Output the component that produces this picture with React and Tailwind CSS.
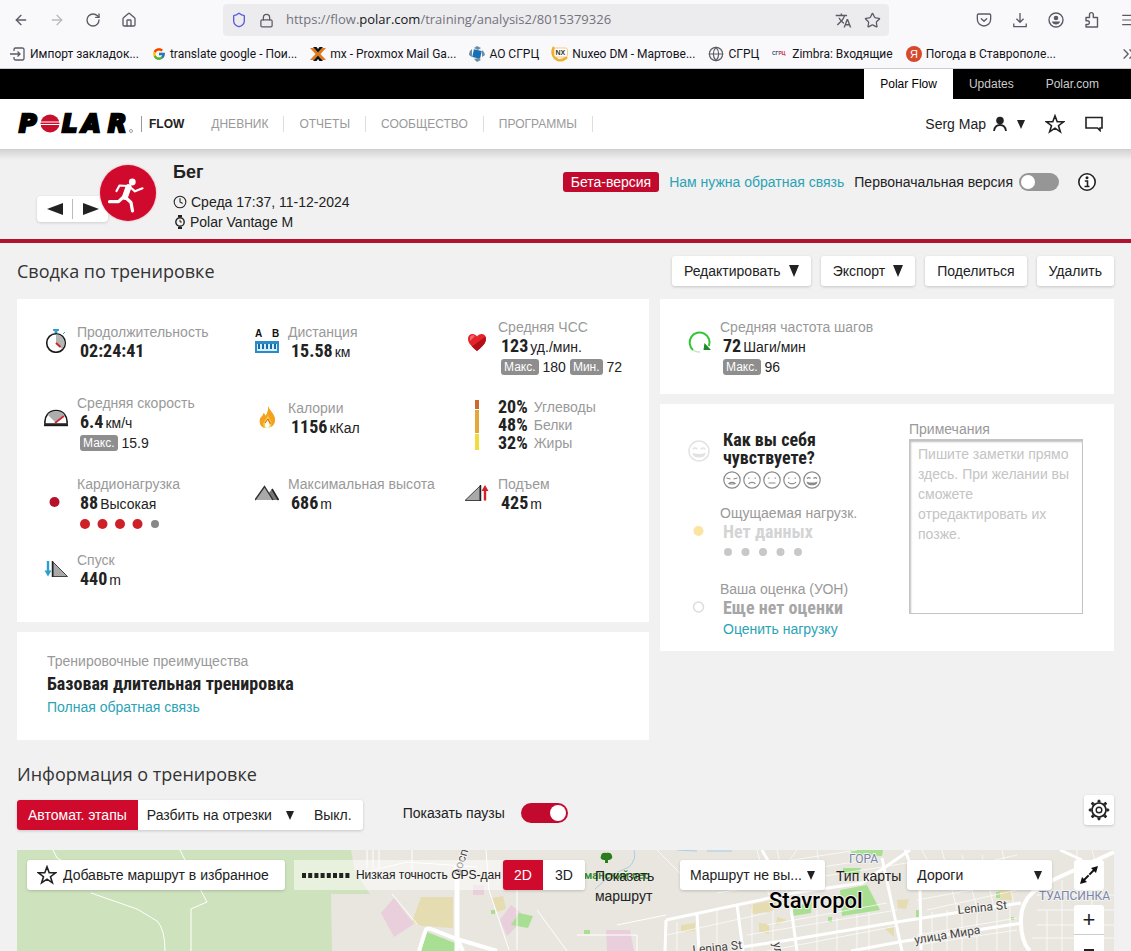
import {
  ArrowLeft,
  ArrowRight,
  ChevronsRight,
  Clock,
  Globe,
  House,
  Lock,
  Menu,
  Pocket,
  RotateCw,
  Shield,
  Star,
} from "lucide-react";
import { useState } from "react";
import { FcGoogle } from "react-icons/fc";
import { MdTranslate } from "react-icons/md";

const bookmarks = [
  { label: "Импорт закладок...", icon: ImportIcon },
  { label: "translate google - Пои...", icon: GoogleIcon },
  { label: "mx - Proxmox Mail Ga...", icon: ProxmoxIcon },
  { label: "АО СГРЦ", icon: GearBlueIcon },
  { label: "Nuxeo DM - Мартове...", icon: NuxeoIcon },
  { label: "СГРЦ", icon: GlobeIcon },
  { label: "Zimbra: Входящие", icon: ZimbraIcon },
  { label: "Погода в Ставрополе...", icon: YandexIcon },
];

const navItems = ["ДНЕВНИК", "ОТЧЕТЫ", "СООБЩЕСТВО", "ПРОГРАММЫ"];

const macros = [
  { value: "20%", name: "Углеводы" },
  { value: "48%", name: "Белки" },
  { value: "32%", name: "Жиры" },
];

const moods = ["Ужасно", "Плохо", "Нормально", "Хорошо", "Отлично"];

/* ---------- browser icons ---------- */

function ImportIcon() {
  return (
    <svg width="16" height="16" viewBox="0 0 16 16" fill="none" stroke="#5b5b66" strokeWidth="1.3">
      <path d="M4 5V3.500A1.500 1.500 0 0 1 5.500 2h7A1.500 1.500 0 0 1 14 3.500v9a1.500 1.500 0 0 1-1.500 1.500h-7A1.500 1.500 0 0 1 4 12.500V11" />
      <path d="M0 8h10M7.500 5.500 10 8l-2.500 2.500" />
    </svg>
  );
}

function GoogleIcon() {
  return <FcGoogle size={14} />;
}

function ProxmoxIcon() {
  return (
    <svg width="16" height="16" viewBox="0 0 16 16">
      <path d="M0 2h4l4 4.500L12 2h4l-5.500 6 5.500 6h-4L8 9.500 4 14H0l5.500-6z" fill="#e07a1c" />
      <path d="M3 1h3.500L8 3l1.500-2H13L8 6.500zM3 15h3.500L8 13l1.500 2H13L8 9.500z" fill="#111" />
    </svg>
  );
}

function GearBlueIcon() {
  return (
    <svg width="16" height="16" viewBox="0 0 16 16">
      <path d="M3 3Q0 5 0 9l3 2zM13 4q3 2 3 5l-3 2zM5 2l3-2 4 2-3 2zM5 13l3 3 4-2-3-2z" fill="#6d8ba3" />
      <rect x="4" y="4" width="8" height="8" fill="#1670b5" transform="rotate(12 8 8)" />
    </svg>
  );
}

function NuxeoIcon() {
  return (
    <svg width="16" height="16" viewBox="0 0 16 16" className="overflow-visible">
      <path d="M2 1C-1 6 1 12 6 14c4 1 7-1 9-3" fill="none" stroke="#eeb02f" strokeWidth="2.500" />
      <rect x="2" y="2" width="13.500" height="9" rx="2" fill="#fff" stroke="#eeb02f" strokeWidth="0.600" />
      <text x="3.500" y="9" fontSize="7" fontWeight="700" fontFamily="Liberation Sans" fill="#333">NX</text>
    </svg>
  );
}

function GlobeIcon() {
  return <Globe size={16} strokeWidth={1.8} color="#5b5b66" />;
}

function ZimbraIcon() {
  return (
    <svg width="16" height="16" viewBox="0 0 16 16" className="overflow-visible">
      <text x="0" y="9" fontSize="5" fontWeight="700" fontFamily="Liberation Sans" fill="#31508f">
        СГ<tspan fill="#c8324b">РЦ</tspan>
      </text>
    </svg>
  );
}

function YandexIcon() {
  return (
    <svg width="16" height="16" viewBox="0 0 16 16">
      <circle cx="8" cy="8" r="8" fill="#d6492c" />
      <text x="8" y="12" fontSize="11" textAnchor="middle" fontFamily="Liberation Sans" fill="#fff">Я</text>
    </svg>
  );
}

function DownloadIcon() {
  return (
    <svg width="16" height="16" viewBox="0 0 18 18" fill="none" stroke="currentColor" strokeWidth="1.500">
      <path d="M9 1v10.500M5 7.500l4 4 4-4M2 13v3.500h14V13" />
    </svg>
  );
}

function AccountIcon() {
  return (
    <svg width="16" height="16" viewBox="0 0 16 16">
      <circle cx="8" cy="8" r="7" fill="none" stroke="currentColor" strokeWidth="1.400" />
      <circle cx="8" cy="6" r="2.300" fill="currentColor" />
      <path d="M3.800 9.500h8.400c-.6 2-2.200 3-4.200 3s-3.600-1-4.200-3z" fill="currentColor" />
    </svg>
  );
}

function ExtensionIcon() {
  return (
    <svg width="16" height="18" viewBox="0 0 16 18" fill="none" stroke="currentColor" strokeWidth="1.400">
      <path d="M2 6.500h3.500V3.500a1.800 1.800 0 0 1 3.800 0v3h4.200v9.500H2v-2.500h1.500a1.800 1.800 0 0 0 0-3.800H2z" strokeLinejoin="round" />
    </svg>
  );
}

/* ---------- site icons ---------- */

function Caret({ className = "" }) {
  return (
    <svg className={className} width="10" height="12" viewBox="0 0 10 12" aria-hidden="true">
      <path d="M0 0h10L5 12z" fill="#222" />
    </svg>
  );
}

function SmallCaret({ className = "" }) {
  return (
    <svg className={className} width="8" height="9" viewBox="0 0 8 9" aria-hidden="true">
      <path d="M0 0h8L4 9z" fill="#222" />
    </svg>
  );
}

function PolarLogo() {
  return (
    <svg width="116" height="24" viewBox="0 0 116 24" role="img" aria-label="POLAR" className="overflow-visible">
      <g fontFamily="DejaVu Sans" fontWeight="700" fontStyle="italic" fontSize="24" fill="#000" stroke="#000" strokeWidth="2.600">
        <text x="1" y="20">P</text>
        <text x="44" y="20">L</text>
        <text x="64" y="20">A</text>
        <text x="90" y="20">R</text>
      </g>
      <ellipse cx="32" cy="11.500" rx="9.500" ry="9" fill="#c8102e" />
      <path d="M22 10h20M22 12.500h20" stroke="#fff" strokeWidth="1" />
      <circle cx="113" cy="19" r="1.500" fill="none" stroke="#888" strokeWidth="0.800" />
    </svg>
  );
}

function UserIcon() {
  return (
    <svg width="14" height="16" viewBox="0 0 14 16">
      <circle cx="7" cy="4.500" r="3.800" fill="#222" />
      <path d="M1 15c.5-4 3-6 6-6s5.500 2 6 6" fill="none" stroke="#222" strokeWidth="1.800" />
    </svg>
  );
}

function FiveStar({ size = 20 }) {
  return (
    <svg width={size} height={size} viewBox="0 0 20 20" fill="none" stroke="#222" strokeWidth="1.600">
      <path d="M10 1.800l2.200 6h6.300l-5 3.900 1.900 6.200L10 14.200l-5.400 3.700 1.900-6.200-5-3.900h6.300z" />
    </svg>
  );
}

function SpeechIcon() {
  return (
    <svg width="18" height="16" viewBox="0 0 18 16" fill="none" stroke="#222" strokeWidth="1.600">
      <path d="M1 1.500h16v10.500h-2v2.500L12.500 12H1z" />
    </svg>
  );
}

function RunnerIcon() {
  return (
    <svg width="56" height="56" viewBox="0 0 56 56" fill="none" stroke="#fff" strokeLinecap="round" strokeLinejoin="round">
      <circle cx="32.300" cy="17" r="3.400" fill="#fff" stroke="none" />
      <path d="M28.500 22L25 32" strokeWidth="6" />
      <path d="M28 21l-8.500-.5L16.500 26M29.500 21.500l5.500 4.800 7.500-3" strokeWidth="2.200" />
      <path d="M25.500 32.500l5.500 5L32.500 46M24 31.500l-5.500 5.200H9.500" strokeWidth="3.200" />
    </svg>
  );
}

function InfoIcon() {
  return (
    <svg width="20" height="20" viewBox="0 0 20 20" className="ml-2">
      <circle cx="10" cy="10" r="8.200" fill="#fff" stroke="#222" strokeWidth="1.600" />
      <circle cx="10" cy="5.800" r="1.500" fill="#222" />
      <path d="M7.800 9h2.700v5.500M7.500 14.500h5" fill="none" stroke="#222" strokeWidth="1.600" />
    </svg>
  );
}

function WatchIcon() {
  return (
    <svg width="13" height="14" viewBox="0 0 13 14">
      <path d="M5 0h4v2H5zM5 12h4v2H5z" fill="#222" />
      <circle cx="7" cy="7" r="4.200" fill="none" stroke="#222" strokeWidth="1.400" />
      <path d="M7 4.800V7h1.800" fill="none" stroke="#222" />
    </svg>
  );
}

function StopwatchIcon() {
  return (
    <svg width="24" height="24" viewBox="0 0 24 24">
      <path d="M9.500 0h5v1.600h-1.600V4h-1.800V1.600H9.500zM19 5l2-2" fill="#2a9fd0" stroke="#2a9fd0" />
      <circle cx="12" cy="14" r="9.300" fill="#fff" stroke="#1b1b1b" strokeWidth="1.600" />
      <path d="M12 14V5.500a8.500 8.500 0 0 1 6 14.500z" fill="#b5b5b5" />
      <path d="M12 14l4.500 4" stroke="#d0232b" strokeWidth="2" />
    </svg>
  );
}

function DistanceIcon() {
  return (
    <svg width="24" height="24" viewBox="0 0 24 24" className="overflow-visible">
      <g fontFamily="Liberation Sans" fontWeight="700" fontSize="10" fill="#111">
        <text x="0" y="8">A</text>
        <text x="17" y="8">B</text>
      </g>
      <rect y="12" width="24" height="12" fill="#2a8bc9" />
      <rect x="2" y="15" width="20" height="7" fill="#d5eefa" />
      <path d="M4 15v5M8 15v5M12 15v5M16 15v5M20 15v5" stroke="#1769ad" strokeWidth="2" />
    </svg>
  );
}

function HeartIcon() {
  return (
    <svg width="24" height="24" viewBox="0 0 24 24">
      <path d="M12 22C6 17 3 14 3 9.800 3 7 5 5 7.500 5c2 0 3.500 1 4.500 2.500C13 6 14.500 5 16.500 5 19 5 21 7 21 9.800 21 14 18 17 12 22z" fill="#e5232b" />
      <path d="M20.500 7.500c1.500 5-1.500 9-8.500 14.500-2-1.500-3.700-3-5-4.500z" fill="#b20f17" />
      <path d="M5 8c1-2 4-2 5-1l-5 5z" fill="#f0686c" />
    </svg>
  );
}

function SpeedIcon() {
  return (
    <svg width="24" height="24" viewBox="0 0 24 24">
      <path d="M1 19C0 11 5 5.500 12 5.500S24 11 23 19z" fill="#fff" stroke="#1b1b1b" strokeWidth="1.600" />
      <path d="M12 18L3.500 9.500C8 5.500 16 5 20.500 9.500z" fill="#adadad" />
      <path d="M11 18l9-7" stroke="#d0232b" strokeWidth="1.600" />
      <path d="M0 20.200h24" stroke="#1b1b1b" strokeWidth="2" />
    </svg>
  );
}

function FlameIcon() {
  return (
    <svg width="24" height="24" viewBox="0 0 24 24">
      <path d="M13 1c1 4 7 8 7 14 0 4-3 7.500-7.500 8C7 23 4.500 19.500 4.800 15.500 5 12 8 11.500 8.500 8c1.200.8 1.800 2 2 3C12.500 8.500 13.500 5 13 1z" fill="#f8c63a" />
      <path d="M13 1c1 4 7 8 7 14 0 3-2 6-4 7 2-6-2-8-3-12-1 3-4 5-5 9 0 2 1 3 2 4-4-1-5.500-4-5.200-7.500C5 12 8 11.500 8.500 8c1.200.8 1.800 2 2 3C12.500 8.500 13.500 5 13 1z" fill="#f4a11f" />
      <path d="M12.500 14c.5 3 2.500 4 2.200 6.500-.2 1.500-1.200 2.500-2.500 2.500-2-.5-3-2-2-4.500.5-1.500 2-2.500 2.300-4.500z" fill="#fff" />
      <path d="M10 18l3-4 2.500 5" fill="none" stroke="#d0652a" />
    </svg>
  );
}

function MacroBar() {
  return (
    <svg width="24" height="50" viewBox="0 0 24 50">
      <rect x="10" width="4" height="9" fill="#cf6a2f" />
      <rect x="10" y="10" width="4" height="23" fill="#e3a73c" />
      <rect x="10" y="34" width="4" height="16" fill="#f0dc3a" />
    </svg>
  );
}

function DotIcon({ fill = "none", stroke = "none" }) {
  return (
    <svg width="24" height="40" viewBox="0 0 24 40">
      <circle cx="10.500" cy="21" r="5" fill={fill} stroke={stroke} strokeWidth="1.500" />
    </svg>
  );
}

function MountainIcon() {
  return (
    <svg width="24" height="24" viewBox="0 0 24 24">
      <path d="M13 13l4-5 7 11h-7z" fill="#777" />
      <path d="M17 8l6.500 11" stroke="#222" strokeWidth="1.600" />
      <path d="M0 19L9.500 5.500 18 19z" fill="#a9a9a9" />
      <path d="M0 19L9.500 5.500 18 19" fill="none" stroke="#333" strokeWidth="1.400" />
    </svg>
  );
}

function AscentIcon() {
  return (
    <svg width="24" height="24" viewBox="0 0 24 24">
      <path d="M0 19.500L15 5v14.500z" fill="#a9a9a9" stroke="#444" />
      <path d="M15.500 4v16" stroke="#222" strokeWidth="1.500" />
      <path d="M20 4l3.500 6h-2.300v9.500h-2.400V10h-2.300z" fill="#d0232b" />
    </svg>
  );
}

function DescentIcon() {
  return (
    <svg width="24" height="24" viewBox="0 0 24 24">
      <path d="M9 5l14.500 14.500H9z" fill="#a9a9a9" stroke="#444" />
      <path d="M8.500 4v16" stroke="#222" strokeWidth="1.500" />
      <path d="M4 19.500L.5 13.500h2.300V4h2.400v9.500h2.300z" fill="#2a9fd0" />
    </svg>
  );
}

function CadenceIcon() {
  return (
    <svg width="24" height="24" viewBox="0 0 24 24">
      <path d="M5 21A10 10 0 1 1 21 17" fill="none" stroke="#35c435" strokeWidth="2" />
      <path d="M15.500 21l1-7 6.500 7z" fill="#1d8a22" />
      <path d="M12 23A10 10 0 0 1 5 21" fill="none" stroke="#bfe8bf" strokeWidth="1.500" />
    </svg>
  );
}

function Face({ mood, size = 18 }) {
  return (
    <svg width={size} height={size} viewBox="0 0 18 18" fill="none" stroke="currentColor" strokeWidth="1.200">
      <circle cx="9" cy="9" r="8.200" />
      {mood === 0 && <path d="M3.500 7l4 1M14.500 7l-4 1M6 12.500c1.500-1.500 4.500-1.500 6 0l-1 .5H7z" />}
      {mood === 1 && <path d="M5.800 6.500v1.200M12.200 6.500v1.200M5.500 13c1.500-2.200 5.500-2.200 7 0" />}
      {mood === 2 && <path d="M5.800 6.500v1.200M12.200 6.500v1.200M5.500 12h7" />}
      {mood === 3 && <path d="M5.800 6.500v1.200M12.200 6.500v1.200M5 11c1.500 2.500 6.500 2.500 8 0" />}
      {mood === 4 && (
        <>
          <path d="M4 7.500c1-1.200 2.500-1.200 3.500 0M10.500 7.500c1-1.200 2.500-1.200 3.500 0" />
          <path d="M4.500 11.500c2 .8 7 .8 9 0-1 3-8 3-9 0z" fill="currentColor" />
        </>
      )}
    </svg>
  );
}

function GearIcon() {
  const teeth = [0, 45, 90, 135, 180, 225, 270, 315];
  return (
    <svg width="22" height="22" viewBox="0 0 22 22" fill="none" stroke="#222">
      {teeth.map((deg) => (
        <path key={deg} d="M9.800 3.500L10.200 1.200h1.600l.4 2.300" fill="#222" strokeWidth="1" transform={`rotate(${deg} 11 11)`} />
      ))}
      <circle cx="11" cy="11" r="7" strokeWidth="1.700" fill="#fff" />
      <circle cx="11" cy="11" r="2.800" strokeWidth="1.400" />
    </svg>
  );
}

/* ---------- building blocks ---------- */

function Tag({ children }) {
  return <span className="rounded-[3px] bg-[#8e8e8e] px-[3px] text-[12px] leading-4 text-white">{children}</span>;
}

function Dots({ active = 0, color = "#c8c8c8" }) {
  return (
    <svg width="82" height="12" viewBox="0 0 82 12" className="my-[5px]">
      {[0, 1, 2, 3, 4].map((n) => (
        <circle key={n} cx={5 + n * 17.5} cy="6" r={n < active ? 5 : 4} fill={n < active ? "#d02027" : color} />
      ))}
    </svg>
  );
}

function Metric({ icon, label, value, unit, raised, gap = "gap-[9px]", children }) {
  return (
    <div className={`flex h-[76px] items-start ${gap}`}>
      <div className="mt-[26px] w-6 shrink-0">{icon}</div>
      <div className={raised ? "pt-[14px]" : "pt-[19px]"}>
        <p className="text-[14px] leading-5 whitespace-nowrap text-[#999]">{label}</p>
        <div className="pl-[3px]">
          <p className="flex items-baseline gap-[2px] leading-[18px] whitespace-nowrap">
            <span className="font-[Roboto_Condensed,Liberation_Sans_Narrow,Roboto,sans-serif] text-[18px] font-bold text-[#222]">{value}</span>
            <span className="text-[14px] text-[#222]">{unit}</span>
          </p>
          {children}
        </div>
      </div>
    </div>
  );
}

function ActionButton({ children }) {
  return (
    <button type="button" className="flex h-[30px] items-center gap-2 rounded-[3px] bg-white px-3 text-[14px] text-[#222] shadow-[0_1px_3px_rgba(0,0,0,0.18)]">
      {children}
    </button>
  );
}

function MapSelect({ label, options, className }) {
  return (
    <div className={`relative h-[30px] ${className}`}>
      <select aria-label={label} className="size-full appearance-none rounded-[3px] bg-white pr-5 pl-[10px] text-[14px] text-[#222] shadow-[0_1px_3px_rgba(0,0,0,0.18)]">
        {options.map((option) => (
          <option key={option}>{option}</option>
        ))}
      </select>
      <SmallCaret className="pointer-events-none absolute top-[11px] right-[10px]" />
    </div>
  );
}

function Browser() {
  return (
    <div className="overflow-hidden border-b border-[#ccccd2] bg-[#f9f9fb] font-[Open_Sans,Noto_Sans,sans-serif] text-[#15141a]">
      <div className="flex h-10 items-center pl-[13px] text-[#5b5b66]">
        <div className="flex items-center gap-5">
          <button type="button" aria-label="Назад"><ArrowLeft size={16} strokeWidth={2} /></button>
          <button type="button" aria-label="Вперед"><ArrowRight size={16} strokeWidth={2} className="text-[#b9b9c0]" /></button>
          <button type="button" aria-label="Обновить"><RotateCw size={16} strokeWidth={2} /></button>
          <button type="button" aria-label="Домой"><House size={16} strokeWidth={2} /></button>
        </div>
        <div className="ml-[86px] flex h-8 flex-[650] items-center gap-3 rounded bg-[#ececef] px-2">
          <Shield size={16} strokeWidth={2} className="text-[#5a5ae0]" />
          <Lock size={15} strokeWidth={2} />
          <p className="flex-1 text-[13px] whitespace-nowrap text-[#73737c]">
            https://flow.<span className="text-[#15141a]">polar.com</span>/training/analysis2/8015379326
          </p>
          <MdTranslate size={17} />
          <Star size={17} strokeWidth={1.800} />
        </div>
        <div className="flex flex-[242] items-center justify-end gap-5">
          <Pocket size={16} strokeWidth={2} />
          <DownloadIcon />
          <AccountIcon />
          <ExtensionIcon />
          <Menu size={16} strokeWidth={1.800} className="-mr-[5px]" />
        </div>
      </div>
      <div className="flex h-7 items-center justify-between pl-[10px]">
        <div className="flex items-center gap-[13px] font-[Roboto,Noto_Sans,sans-serif]">
          {bookmarks.map(({ label, icon: Icon }) => (
            <a key={label} href="#" className="flex items-center gap-1 text-[12px] whitespace-nowrap">
              <Icon />
              {label}
            </a>
          ))}
        </div>
        <ChevronsRight size={20} strokeWidth={1.600} className="-mr-2 shrink-0 text-[#5b5b66]" />
      </div>
    </div>
  );
}

function SiteHeader() {
  return (
    <header className="bg-white">
      <div className="flex h-[30px] items-stretch justify-end bg-black pr-4 text-[12px] leading-[30px]">
        <a href="#" className="bg-white px-4 text-black">Polar Flow</a>
        <a href="#" className="px-4 text-[#ccc]">Updates</a>
        <a href="#" className="px-4 text-[#ccc]">Polar.com</a>
      </div>
      <div className="flex h-[51px] items-center justify-between border-b border-[#d0d0d0] pr-7 pl-[18px]">
        <div className="flex items-center text-[12px]">
          <PolarLogo />
          <span className="ml-[7px] border-l border-[#999] pl-[7px] leading-4 font-bold text-[#222]">FLOW</span>
          <nav className="ml-3 flex">
            {navItems.map((item) => (
              <a key={item} href="#" className="border-r border-[#ddd] px-[15px] leading-4 text-[#999]">
                {item}
              </a>
            ))}
          </nav>
        </div>
        <div className="flex items-center text-[14px] text-[#222]">
          Serg Map
          <span className="mr-[10px] ml-[7px]"><UserIcon /></span>
          <SmallCaret />
          <span className="mr-5 ml-5"><FiveStar /></span>
          <SpeechIcon />
        </div>
      </div>
    </header>
  );
}

function TrainingHeader() {
  return (
    <div className="flex h-[93px] items-start justify-between border-b-4 border-[#b0122f] bg-[linear-gradient(#d4d4d4,#f1f1f1_10px)] pr-[34px] pl-[37px]">
      <div className="flex items-start">
        <div className="mt-[46px] flex h-[26px] w-[71px] items-center rounded bg-white shadow-[0_1px_3px_rgba(0,0,0,0.15)]">
          <button type="button" aria-label="Предыдущая" className="flex flex-1 justify-center border-r border-[#bbb] py-1">
            <svg width="16" height="12" viewBox="0 0 16 12"><path d="M16 0v12L0 6z" fill="#222" /></svg>
          </button>
          <button type="button" aria-label="Следующая" className="flex flex-1 justify-center py-1">
            <svg width="16" height="12" viewBox="0 0 16 12"><path d="M0 0v12l16-6z" fill="#222" /></svg>
          </button>
        </div>
        <div className="relative mt-[15px] -ml-2 size-14 rounded-full bg-[#cf0a2c] shadow-[0_0_2px_#f08a9c]">
          <RunnerIcon />
        </div>
        <div className="mt-3 ml-[17px] text-[#222]">
          <h1 className="text-[18px] leading-5 font-bold">Бег</h1>
          <p className="mt-[10px] flex items-center gap-1 text-[14px] leading-5"><Clock size={14} strokeWidth={1.800} />Среда 17:37, 11-12-2024</p>
          <p className="flex items-center gap-1 text-[14px] leading-5"><WatchIcon />Polar Vantage M</p>
        </div>
      </div>
      <div className="mt-[22px] flex items-center gap-[10px] text-[14px] leading-5 whitespace-nowrap">
        <span className="rounded-[3px] bg-[#c20a2e] px-2 text-white">Бета-версия</span>
        <a href="#" className="text-[#2aa3b5]">Нам нужна обратная связь</a>
        <label htmlFor="original" className="text-[#222]">Первоначальная версия</label>
        <input
          id="original"
          type="checkbox"
          className="-ml-1 h-[18px] w-10 appearance-none rounded-full bg-[#969696] before:block before:size-[14px] before:translate-x-0.5 before:translate-y-0.5 before:rounded-full before:bg-white checked:before:translate-x-6"
        />
        <InfoIcon />
      </div>
    </div>
  );
}

function SummaryCard() {
  return (
    <section className="grid grid-cols-[211fr_210fr_184fr] bg-white pt-1 pb-[15px] pl-[27px]">
      <Metric icon={<StopwatchIcon />} label="Продолжительность" value="02:24:41" />
      <Metric icon={<DistanceIcon />} label="Дистанция" value="15.58" unit="км" />
      <Metric icon={<HeartIcon />} label="Средняя ЧСС" value="123" unit="уд./мин." raised>
        <p className="flex items-center gap-1 text-[14px] leading-[22px] text-[#222]">
          <Tag>Макс.</Tag>180 <Tag>Мин.</Tag>72
        </p>
      </Metric>
      <Metric icon={<SpeedIcon />} label="Средняя скорость" value="6.4" unit="км/ч" raised>
        <p className="flex items-center gap-1 text-[14px] leading-[22px] text-[#222]">
          <Tag>Макс.</Tag>15.9
        </p>
      </Metric>
      <Metric icon={<FlameIcon />} label="Калории" value="1156" unit="кКал" />
      <div className="flex h-[76px] items-start gap-[9px]">
        <div className="mt-[21px]"><MacroBar /></div>
        <ul className="pt-[19px]">
          {macros.map((macro) => (
            <li key={macro.name} className="flex h-[18px] items-center gap-[6px] text-[14px] leading-[18px] text-[#999]">
              <b className="font-[Roboto_Condensed,Liberation_Sans_Narrow,Roboto,sans-serif] text-[18px] text-[#222]">{macro.value}</b>
              {macro.name}
            </li>
          ))}
        </ul>
      </div>
      <Metric icon={<DotIcon fill="#b5122b" />} label="Кардионагрузка" value="88" unit="Высокая">
        <Dots active={4} color="#888" />
      </Metric>
      <Metric icon={<MountainIcon />} label="Максимальная высота" value="686" unit="m" />
      <Metric icon={<AscentIcon />} label="Подъем" value="425" unit="m" />
      <Metric icon={<DescentIcon />} label="Спуск" value="440" unit="m" />
    </section>
  );
}

function FeelingCard() {
  return (
    <section className="flex justify-between bg-white pt-1 pr-[31px] pb-[15px] pl-7">
      <div>
        <div className="flex h-[76px] items-start">
          <div className="mt-8 w-[35px] shrink-0 text-[#e2e2e2]"><Face mood={4} size={22} /></div>
          <div className="pt-[23px]">
            <h2 className="font-[Roboto_Condensed,Liberation_Sans_Narrow,Roboto,sans-serif] text-[18px] leading-[18px] font-bold whitespace-nowrap text-[#222]">
              Как вы себя<br />чувствуете?
            </h2>
            <div className="mt-1 flex gap-0.5 text-[#8a8a8a]">
              {moods.map((mood, index) => (
                <button key={mood} type="button" aria-label={mood}><Face mood={index} /></button>
              ))}
            </div>
          </div>
        </div>
        <Metric icon={<DotIcon fill="#fbe3a0" />} label="Ощущаемая нагрузк." value={<span className="text-[#d4d4d4]">Нет данных</span>} gap="gap-2">
          <Dots />
        </Metric>
        <Metric icon={<DotIcon stroke="#ddd" />} label="Ваша оценка (УОН)" value={<span className="text-[#a6a6a6]">Еще нет оценки</span>} gap="gap-2">
          <a href="#" className="text-[14px] leading-[22px] whitespace-nowrap text-[#2aa3b5]">Оценить нагрузку</a>
        </Metric>
      </div>
      <div className="w-[174px] shrink-0 pt-[11px] text-[14px] leading-5">
        <label htmlFor="notes" className="block text-[#999]">Примечания</label>
        <textarea
          id="notes"
          placeholder="Пишите заметки прямо здесь. При желании вы сможете отредактировать их позже."
          className="block h-[175px] w-full resize-none border border-[#c4c4c4] px-2 py-1 shadow-[inset_1px_2px_2px_rgba(0,0,0,0.25)] placeholder:text-[#c4c4c4]"
        />
      </div>
    </section>
  );
}

function MapDrawing() {
  return (
    <svg className="absolute inset-0 size-full" viewBox="0 0 1097 101" preserveAspectRatio="xMinYMin slice" aria-hidden="true">
      <rect width="1097" height="101" fill="#e9e6df" />
      <path d="M0 0h334l4 22 15 22h-39l1 57H0z" fill="#cee3bd" />
      <g fill="#e8cfdb">
        <path d="M377 48l20 26-20 13-13-24zM494 55l10 8-3 12-11 11-7-16zM456 35h11v10h-11zM589 80h24l4 21h-27z" />
      </g>
      <g fill="#e5dcb2">
        <path d="M404 47h32v31l-31-2-10-4zM475 48l11-2 3 13-9 3zM733 55l28-6-5 12-20 3zM664 75l14-2v8l-14 1zM742 73l10 1v10l-10-2zM760 67l10 3-11 5zM867 78l10-1v10zM880 50l12-1-3 10-8-1zM981 40h14v10h-12z" />
      </g>
      <g fill="#a9df92">
        <path d="M410 82l28 11 2 8h-36zM823 40l27-5 13 25-38 6zM776 57l19-5-1 11-18 3zM833 0h33l-1 6-29-1zM826 18h18l-2 6h-16zM811 67h4v5h-4zM899 60h4v10l-4-2zM979 42h4v6h-4zM567 80h6v4h-6zM474 60h4v4h-4zM994 67h3v3h-3zM494 75l8-12 14 3-5 12z" />
      </g>
      <g fill="none" stroke="#a5cdea">
        <path d="M578 39l16-14 18-8q8-8 5-17M660 0l20 1M690 1h25" />
      </g>
      {/* minor streets */}
      <g fill="none" stroke="#fff" strokeWidth="0.700">
        <path d="M36 0l4 8 10 5M74 43l46 16 20 12q8 8 8 30M163 0l10 20 17 32-16 7v42M350 0v18M356 0v18M362 0v18M340 24l50-12 70 5M375 44l25 30M395 0v20M469 0l3 40 20 60M500 40v60M520 60l30 41M560 85h60v16M600 75l49-10" strokeWidth="1" />
        <path d="M650 85l100-22M660 72v29M700 60v41M735 50v51M756 60v41M800 60v41M820 68v33M840 64v37M852 62v39M915 62v39M930 60v41M945 60v41M960 58v43M980 58v43M993 55v46M1030 60v41M1045 30v71M1058 60v41M1075 50v51" />
        <path d="M640 0l40 40M680 25l160-25M690 35l160-25M700 43l190-30M890 30l110-25M900 50l120-22M910 60l90-20M1020 60h77M1020 75h77M1015 88h82M1020 45h77M750 75l120-22M730 85l150-25M750 101l130-25M900 85l100-17M900 95l100-15" />
        <path d="M905 0l15 30M925 0l15 60M945 5l15 53M965 5l12 53M985 0l12 55M1060 0v30M1075 0l8 30M740 0l12 45M760 0l10 44M800 0l5 38M780 0l-15 20" />
      </g>
      {/* main roads */}
      <g fill="none" stroke="#fff">
        <path d="M649 70l127-27 69-10 48-33M725 97l47-7 108-18 89-14 35-5M834 101l48-9 123-19M649 70l-1 31M720 55l6 46M680 63l2 38M774 58l6 43M865 8l20 93M888 0l15 40 1 60M745 0l10 18M1043 0l22 10" strokeWidth="3" />
        <path d="M1097 2l-61 28-20 12q-13 12-12 30 0 20 9 29" strokeWidth="4" />
        <path d="M440 15v86" strokeWidth="5" />
        <path d="M402 101l6-19q1-5 6-3l26 10 40 12M440 89l6 12" strokeWidth="4" />
      </g>
      <g fontFamily="Roboto, sans-serif" fontSize="12" fill="#444" stroke="#f4f2ee" strokeWidth="2" paintOrder="stroke">
        <text x="941" y="64" transform="rotate(-6 941 64)">Lenina St</text>
        <text x="898" y="94" transform="rotate(-9 898 94)">улица Мира</text>
        <text x="676" y="104" transform="rotate(-6 676 104)">Lenina St</text>
        <text x="443" y="26" transform="rotate(-72 443 26)">росп</text>
        <text x="756" y="93" transform="rotate(80 756 93)">ул</text>
        <g fill="#7886ab">
          <text x="832" y="13">ГОРА</text>
          <text x="1022" y="50">ТУАПСИНКА</text>
        </g>
        <text x="567" y="29" fontSize="11" fontWeight="700" fill="#3c8d2f" strokeWidth="1">манский лес</text>
        <text x="752" y="58" fontSize="22" fontWeight="500" fill="#000">Stavropol</text>
      </g>
      <path d="M588 13v-3c-4 0-5-2-4-4 0-3 3-4 5-3 3-1 6 0 6 3 1 2-1 4-4 4v3z" fill="#2c7d1f" />
    </svg>
  );
}

function RouteMap() {
  return (
    <div className="relative min-h-[101px] flex-1 overflow-hidden">
      <MapDrawing />
      <div className="absolute inset-x-[10px] top-[10px] flex items-start text-[14px] text-[#222]">
        <button type="button" className="flex h-[30px] shrink-0 items-center gap-[6px] rounded-[3px] bg-white pr-4 pl-[10px] whitespace-nowrap shadow-[0_1px_3px_rgba(0,0,0,0.18)]">
          <FiveStar />
          Добавьте маршрут в избранное
        </button>
        <div className="ml-[9px] flex h-[30px] w-[209px] shrink-0 items-center gap-[6px] overflow-hidden bg-white/50 pl-2 text-[12px] whitespace-nowrap">
          <svg width="48" height="5" viewBox="0 0 48 5" className="shrink-0">
            <path d="M0 2.500h48" stroke="#222" strokeWidth="5" strokeDasharray="4 2.200" />
          </svg>
          Низкая точность GPS-дан
        </div>
        <div className="flex h-[30px] shrink-0 overflow-hidden rounded-[3px] shadow-[0_1px_3px_rgba(0,0,0,0.18)]">
          <button type="button" className="w-10 bg-[#cf0a2c] text-white">2D</button>
          <button type="button" className="w-[42px] bg-white">3D</button>
        </div>
        <p className="ml-[10px] w-[76px] pt-[6px] leading-5">Показать маршрут</p>
        <MapSelect label="Показать маршрут" options={["Маршрут не вы...", "Маршрут"]} className="ml-[9px] w-[145px] shrink-0" />
        <p className="ml-[11px] shrink-0 pt-[6px] leading-5 whitespace-nowrap">Тип карты</p>
        <MapSelect label="Тип карты" options={["Дороги", "Спутник"]} className="ml-[6px] w-[145px] shrink-0" />
        <div className="ml-auto flex w-[30px] flex-col">
          <button type="button" aria-label="На весь экран" className="flex h-[30px] items-center justify-center rounded-[3px] bg-white">
            <svg width="18" height="18" viewBox="0 0 18 18">
              <path d="M3 15L15 3" stroke="#111" strokeWidth="2" strokeDasharray="8 1" />
              <path d="M18 0l-2 7-5-5zM0 18l2-7 5 5z" fill="#111" />
            </svg>
          </button>
          <div className="mt-[15px] flex flex-col rounded-[3px] bg-white text-[22px] leading-[29px]">
            <button type="button" aria-label="Приблизить" className="h-[30px] border-b border-[#ccc]">+</button>
            <button type="button" aria-label="Отдалить" className="flex h-[29px] justify-center pt-[14px]">
              <svg width="10" height="2" viewBox="0 0 10 2"><path d="M0 1h10" stroke="#222" strokeWidth="2" /></svg>
            </button>
          </div>
        </div>
      </div>
    </div>
  );
}

export default function App() {
  const [showPauses, setShowPauses] = useState(true);

  return (
    <div className="flex h-screen min-h-[600px] flex-col overflow-hidden bg-[#f1f1f1] font-[Liberation_Sans,Arial,sans-serif]">
      <Browser />
      <SiteHeader />
      <TrainingHeader />
      <main className="flex flex-1 flex-col px-[17px]">
        <div className="flex h-14 items-center justify-between">
          <h2 className="font-[Open_Sans,Noto_Sans,sans-serif] text-[18px] text-[#333]">Сводка по тренировке</h2>
          <div className="flex gap-[10px]">
            <ActionButton>Редактировать <Caret /></ActionButton>
            <ActionButton>Экспорт <Caret /></ActionButton>
            <ActionButton>Поделиться</ActionButton>
            <ActionButton>Удалить</ActionButton>
          </div>
        </div>

        <div className="grid grid-cols-[632fr_454fr] gap-x-[11px]">
          <div className="flex flex-col gap-[10px]">
            <SummaryCard />
            <section className="bg-white px-[30px] pt-[19px] pb-[23px] text-[14px] leading-5">
              <p className="text-[#999]">Тренировочные преимущества</p>
              <h3 className="font-[Roboto_Condensed,Liberation_Sans_Narrow,Roboto,sans-serif] text-[18px] leading-[26px] font-bold text-[#222]">Базовая длительная тренировка</h3>
              <a href="#" className="block text-[#2aa3b5]">Полная обратная связь</a>
            </section>
          </div>
          <div className="flex flex-col gap-[10px]">
            <section className="bg-white pt-1 pb-[15px] pl-7">
              <Metric icon={<CadenceIcon />} label="Средняя частота шагов" value="72" unit="Шаги/мин" raised gap="gap-2">
                <p className="flex items-center gap-1 text-[14px] leading-[22px] text-[#222]"><Tag>Макс.</Tag>96</p>
              </Metric>
            </section>
            <FeelingCard />
          </div>
        </div>

        <h2 className="mt-5 font-[Open_Sans,Noto_Sans,sans-serif] text-[18px] leading-7 text-[#333]">Информация о тренировке</h2>
        <div className="mt-[7px] mb-5 flex h-[35px] items-start text-[14px] text-[#222]">
          <div className="mt-[5px] flex h-[30px] overflow-hidden rounded-[3px] bg-white shadow-[0_1px_3px_rgba(0,0,0,0.18)]">
            <button type="button" className="bg-[#cf0a2c] px-[11px] text-white">Автомат. этапы</button>
            <button type="button" className="flex items-center gap-[14px] px-[9px]">Разбить на отрезки <SmallCaret /></button>
            <button type="button" className="px-[11px]">Выкл.</button>
          </div>
          <label htmlFor="pauses" className="mt-2 ml-10 leading-5">Показать паузы</label>
          <input
            id="pauses"
            type="checkbox"
            checked={showPauses}
            onChange={(event) => setShowPauses(event.target.checked)}
            className="mt-2 ml-4 h-5 w-[47px] appearance-none rounded-full bg-[#969696] before:block before:size-4 before:translate-x-0.5 before:translate-y-0.5 before:rounded-full before:bg-white checked:bg-[#c20a2e] checked:before:translate-x-[29px]"
          />
          <button type="button" aria-label="Настройки" className="ml-auto flex size-[30px] items-center justify-center rounded-[3px] bg-white shadow-[0_1px_3px_rgba(0,0,0,0.18)]">
            <GearIcon />
          </button>
        </div>
        <RouteMap />
      </main>
    </div>
  );
}
